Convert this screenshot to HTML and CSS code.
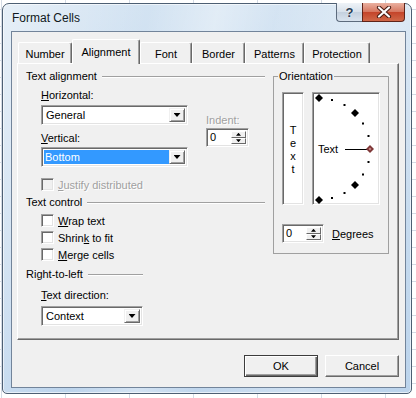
FILE: index.html
```html
<!DOCTYPE html>
<html lang="en">
<head>
    <meta charset="UTF-8">
    <title>Format Cells</title>
    <link rel="stylesheet" href="styles.css">
</head>
<body>
    <div class="window">
        <div class="titlebar">
            <span class="title">Format Cells</span>
            <div class="caption-buttons">
                <div class="cap-btn cap-help">?</div>
                <div class="cap-btn cap-close">
                    <svg width="16" height="12" viewBox="0 0 16 12">
                        <path d="M3 1.5 L13 10.5 M13 1.5 L3 10.5" stroke="#4a1d14" stroke-width="4.2" stroke-linecap="round"/>
                        <path d="M3 1.5 L13 10.5 M13 1.5 L3 10.5" stroke="#fff" stroke-width="2.2" stroke-linecap="round"/>
                    </svg>
                </div>
            </div>
        </div>

        <div class="client">
            <div class="tabs">
                <div class="tab tab-number">Number</div>
                <div class="tab tab-alignment active">Alignment</div>
                <div class="tab tab-font">Font</div>
                <div class="tab tab-border">Border</div>
                <div class="tab tab-patterns">Patterns</div>
                <div class="tab tab-protection">Protection</div>
            </div>

            <div class="panel">
                <div class="left-col">
                    <div class="group-title">Text alignment</div>
                    <div class="align-body">
                        <div class="align-fields">
                            <div class="label"><u>H</u>orizontal:</div>
                            <div class="combo combo-wide combo-first">
                                <div class="combo-value">General</div>
                                <div class="combo-btn"><span class="arrow-down"></span></div>
                            </div>
                            <div class="label label-vertical"><u>V</u>ertical:</div>
                            <div class="combo combo-wide combo-second">
                                <div class="combo-value selected">Bottom</div>
                                <div class="combo-btn"><span class="arrow-down"></span></div>
                            </div>
                        </div>
                        <div class="indent">
                            <div class="label disabled">Indent:</div>
                            <div class="spin spin-indent">
                                <div class="spin-value">0</div>
                                <div class="spin-btns">
                                    <div class="spin-btn"><span class="arrow-up"></span></div>
                                    <div class="spin-btn"><span class="arrow-down small"></span></div>
                                </div>
                            </div>
                        </div>
                    </div>

                    <div class="check check-justify disabled">
                        <span class="box"></span>
                        <span><u>J</u>ustify distributed</span>
                    </div>

                    <div class="group-title group-control">Text control</div>
                    <div class="check check-wrap"><span class="box"></span><span><u>W</u>rap text</span></div>
                    <div class="check check-next"><span class="box"></span><span>Shrin<u>k</u> to fit</span></div>
                    <div class="check check-next"><span class="box"></span><span><u>M</u>erge cells</span></div>

                    <div class="group-title group-rtl">Right-to-left</div>
                    <div class="label label-direction"><u>T</u>ext direction:</div>
                    <div class="combo combo-context">
                        <div class="combo-value">Context</div>
                        <div class="combo-btn"><span class="arrow-down"></span></div>
                    </div>
                </div>

                <fieldset class="orientation">
                    <legend>Orientation</legend>
                    <div class="orient-top">
                        <div class="vtext sunken">
                            <span>T</span><span>e</span><span>x</span><span>t</span>
                        </div>
                        <div class="dial sunken">
                            <svg width="66" height="111" viewBox="0 0 66 111">
                                <g fill="#000">
                                    <polygon points="6,1 10,5 6,9 2,5"/>
                                    <rect x="18" y="6" width="2" height="2"/>
                                    <rect x="30.5" y="11" width="2" height="2"/>
                                    <polygon points="42,16 46,20 42,24 38,20"/>
                                    <rect x="49" y="29.5" width="2" height="2"/>
                                    <rect x="54.5" y="42" width="2" height="2"/>
                                    <rect x="54.5" y="68" width="2" height="2"/>
                                    <rect x="49" y="80.5" width="2" height="2"/>
                                    <polygon points="42,88 46,92 42,96 38,92"/>
                                    <rect x="30.5" y="99" width="2" height="2"/>
                                    <rect x="18" y="104" width="2" height="2"/>
                                    <polygon points="6,103 10,107 6,111 2,107"/>
                                </g>
                                <text x="5" y="60" font-family="Liberation Sans, Arial, sans-serif" font-size="11" fill="#000">Text</text>
                                <line x1="32" y1="56.5" x2="54" y2="56.5" stroke="#000" stroke-width="1"/>
                                <polygon points="57,52 61,56 57,60 53,56" fill="#7d3535"/>
                                <polygon points="57,54.5 58.5,56 57,57.5 55.5,56" fill="#c98a8a"/>
                            </svg>
                        </div>
                    </div>
                    <div class="degrees">
                        <div class="spin spin-degrees">
                            <div class="spin-value">0</div>
                            <div class="spin-btns">
                                <div class="spin-btn"><span class="arrow-up"></span></div>
                                <div class="spin-btn"><span class="arrow-down small"></span></div>
                            </div>
                        </div>
                        <span><u>D</u>egrees</span>
                    </div>
                </fieldset>
            </div>

            <div class="dialog-buttons">
                <div class="btn btn-default">OK</div>
                <div class="btn">Cancel</div>
            </div>
        </div>
    </div>
</body>
</html>
```
FILE: styles.css
```css
* {
    box-sizing: border-box;
}

body {
    margin: 0;
    width: 416px;
    height: 398px;
    overflow: hidden;
    font-family: "Liberation Sans", Arial, sans-serif;
    font-size: 11px;
    color: #000;
    background-color: #fff;
    background-image:
        linear-gradient(90deg, #d4dbe5 1px, transparent 1px),
        linear-gradient(#d4dbe5 1px, transparent 1px);
    background-size: 64px 17px;
    background-position: 1px 9px;
}

u {
    text-decoration: underline;
    text-underline-offset: 1px;
}

/* window frame */
.window {
    margin: 3px 0 0 2px;
    width: 410px;
    height: 391px;
    border: 1px solid #4d5f73;
    border-radius: 7px 7px 5px 5px;
    padding: 0 5px 5px 8px;
    display: flex;
    flex-direction: column;
    background:
        linear-gradient(102deg, rgba(255,255,255,0.45) 0%, rgba(255,255,255,0.1) 22%, rgba(255,255,255,0) 30%, rgba(255,255,255,0.35) 44%, rgba(255,255,255,0.05) 56%, rgba(255,255,255,0.3) 78%, rgba(255,255,255,0) 92%),
        linear-gradient(#d3e3f2, #bcd4ec);
    box-shadow: inset 0 0 0 1px rgba(255,255,255,0.6);
}

.titlebar {
    height: 27px;
    display: flex;
}

.title {
    align-self: center;
    padding-left: 1px;
    font-size: 12px;
    color: #101820;
}

.caption-buttons {
    margin-left: auto;
    margin-right: 1px;
    margin-top: -1px;
    display: flex;
    height: 19px;
}

.cap-btn {
    height: 19px;
    display: flex;
    align-items: center;
    justify-content: center;
    border: 1px solid #5d6b7d;
    border-top: none;
}

.cap-help {
    width: 26px;
    border-right: none;
    border-radius: 0 0 0 4px;
    background: linear-gradient(#eef3f8, #d7e0ea 50%, #c4d0de 51%, #d9e3ee);
    color: #2b3d55;
    font-weight: bold;
    font-size: 13px;
    text-shadow: 0 0 2px #fff;
}

.cap-close {
    width: 43px;
    border-color: #5f2419;
    border-radius: 0 0 4px 0;
    background: linear-gradient(#eab0a0, #d6765f 50%, #c4442a 51%, #d06848);
}

/* client area */
.client {
    flex: 1;
    display: flex;
    flex-direction: column;
    background: #f0f0f0;
    border: 1px solid #72849a;
    padding: 7px 6px 0 5px;
}

.tabs {
    height: 24px;
    display: flex;
    align-items: flex-end;
    padding-left: 1px;
    position: relative;
    z-index: 1;
}

.tab {
    height: 21px;
    display: flex;
    align-items: center;
    justify-content: center;
    background: #f0f0f0;
    border-top: 1px solid #fff;
    border-left: 1px solid #fff;
    border-right: 1px solid #696969;
    border-radius: 2px 2px 0 0;
    box-shadow: inset -1px 0 #a0a0a0;
    padding-top: 1px;
}

.tab.active {
    height: 25px;
    margin-bottom: -1px;
    padding-bottom: 2px;
}

.tab-number { width: 54px; }
.tab-alignment { width: 68px; }
.tab-font { width: 52px; }
.tab-border { width: 53px; }
.tab-patterns { width: 59px; }
.tab-protection { width: 66px; }

.panel {
    height: 277px;
    display: flex;
    gap: 8px;
    padding: 6px 8px 0 8px;
    border: 1px solid;
    border-color: #fff #696969 #696969 #fff;
    box-shadow: inset -1px -1px #a0a0a0;
}

.left-col {
    width: 239px;
}

.group-title {
    height: 13px;
    line-height: 13px;
    display: flex;
    align-items: center;
    gap: 5px;
    white-space: nowrap;
}

.group-title::after {
    content: "";
    flex: 1;
    border-top: 1px solid #a0a0a0;
    border-bottom: 1px solid #fff;
}

.group-control {
    margin-top: 5px;
}

.group-rtl {
    width: 117px;
    margin-top: 7px;
}

.label {
    height: 13px;
    line-height: 13px;
    white-space: nowrap;
}

.disabled {
    color: #a0a0a0;
    text-shadow: 1px 1px #fff;
}

.align-body {
    display: flex;
    margin: 6px 0 0 15px;
}

.align-fields {
    width: 147px;
}

.label-vertical {
    margin-top: 7px;
}

.indent {
    margin: 25px 0 0 18px;
}

/* combo boxes */
.combo {
    display: flex;
    height: 20px;
    padding: 2px;
    background: #fff;
    border: 1px solid;
    border-color: #a0a0a0 #fff #fff #a0a0a0;
    box-shadow: inset 1px 1px #696969, inset -1px -1px #e3e3e3;
}

.combo-wide {
    width: 147px;
}

.combo-first {
    margin-top: 3px;
}

.combo-second {
    margin-top: 2px;
}

.combo-value {
    flex: 1;
    line-height: 14px;
    padding-left: 2px;
}

.combo-value.selected {
    background: #3399ff;
    color: #fff;
    padding-left: 1px;
}

.combo-btn {
    width: 16px;
    display: flex;
    align-items: center;
    justify-content: center;
    background: #f0f0f0;
    border: 1px solid;
    border-color: #f0f0f0 #696969 #696969 #f0f0f0;
    box-shadow: inset 1px 1px #fff, inset -1px -1px #a0a0a0;
}

.arrow-down {
    width: 7px;
    height: 4px;
    background: #000;
    clip-path: polygon(0 0, 100% 0, 50% 100%);
}

.arrow-down.small,
.arrow-up {
    width: 5px;
    height: 3px;
}

.arrow-up {
    background: #000;
    clip-path: polygon(50% 0, 100% 100%, 0 100%);
}

.label-direction {
    margin: 8px 0 0 15px;
}

.combo-context {
    width: 102px;
    margin: 4px 0 0 15px;
}

/* spinners */
.spin {
    display: flex;
    height: 19px;
    padding: 2px;
    background: #fff;
    border: 1px solid;
    border-color: #a0a0a0 #fff #fff #a0a0a0;
    box-shadow: inset 1px 1px #696969, inset -1px -1px #e3e3e3;
}

.spin-indent {
    width: 43px;
    margin-top: 1px;
}

.spin-degrees {
    width: 42px;
}

.spin-value {
    flex: 1;
    line-height: 13px;
    padding-left: 1px;
}

.spin-btns {
    width: 15px;
    display: flex;
    flex-direction: column;
}

.spin-btn {
    flex: 1;
    display: flex;
    align-items: center;
    justify-content: center;
    background: #f0f0f0;
    border: 1px solid;
    border-color: #fff #696969 #696969 #fff;
}

/* checkboxes */
.check {
    display: flex;
    align-items: center;
    gap: 4px;
    height: 13px;
    margin-left: 15px;
    white-space: nowrap;
}

.check-justify {
    margin-top: 11px;
}

.check-wrap {
    margin-top: 5px;
}

.check-next {
    margin-top: 4px;
}

.box {
    width: 13px;
    height: 13px;
    flex: none;
    background: #fff;
    border: 1px solid;
    border-color: #a0a0a0 #fff #fff #a0a0a0;
    box-shadow: inset 1px 1px #696969, inset -1px -1px #e3e3e3;
}

.check.disabled .box {
    background: #f0f0f0;
}

/* orientation */
.orientation {
    margin: 0;
    min-width: 0;
    width: 116px;
    align-self: flex-start;
    padding: 9px 7px 10px 8px;
    border: 1px solid #a0a0a0;
}

.orientation legend {
    padding: 0 1px;
    margin-left: -4px;
    line-height: 13px;
}

.orient-top {
    display: flex;
    gap: 8px;
    height: 113px;
}

.sunken {
    background: #fff;
    border: 1px solid;
    border-color: #a0a0a0 #fff #fff #a0a0a0;
    box-shadow: inset 1px 1px #696969, inset -1px -1px #e3e3e3;
}

.vtext {
    width: 22px;
    display: flex;
    flex-direction: column;
    align-items: center;
    justify-content: center;
    line-height: 13px;
    padding-top: 2px;
}

.dial {
    width: 68px;
}

.dial svg {
    display: block;
}

.degrees {
    margin-top: 19px;
    display: flex;
    align-items: center;
    gap: 8px;
}

/* OK / Cancel */
.dialog-buttons {
    margin-top: 15px;
    display: flex;
    justify-content: flex-end;
    gap: 7px;
}

.btn {
    width: 74px;
    height: 22px;
    display: flex;
    align-items: center;
    justify-content: center;
    background: #f0f0f0;
    border: 1px solid;
    border-color: #fff #696969 #696969 #fff;
    box-shadow: inset -1px -1px #a0a0a0;
}

.btn-default {
    border-color: #3c3c3c;
    box-shadow: inset 1px 1px #fff, inset -1px -1px #696969, inset -2px -2px #a0a0a0;
}
```
